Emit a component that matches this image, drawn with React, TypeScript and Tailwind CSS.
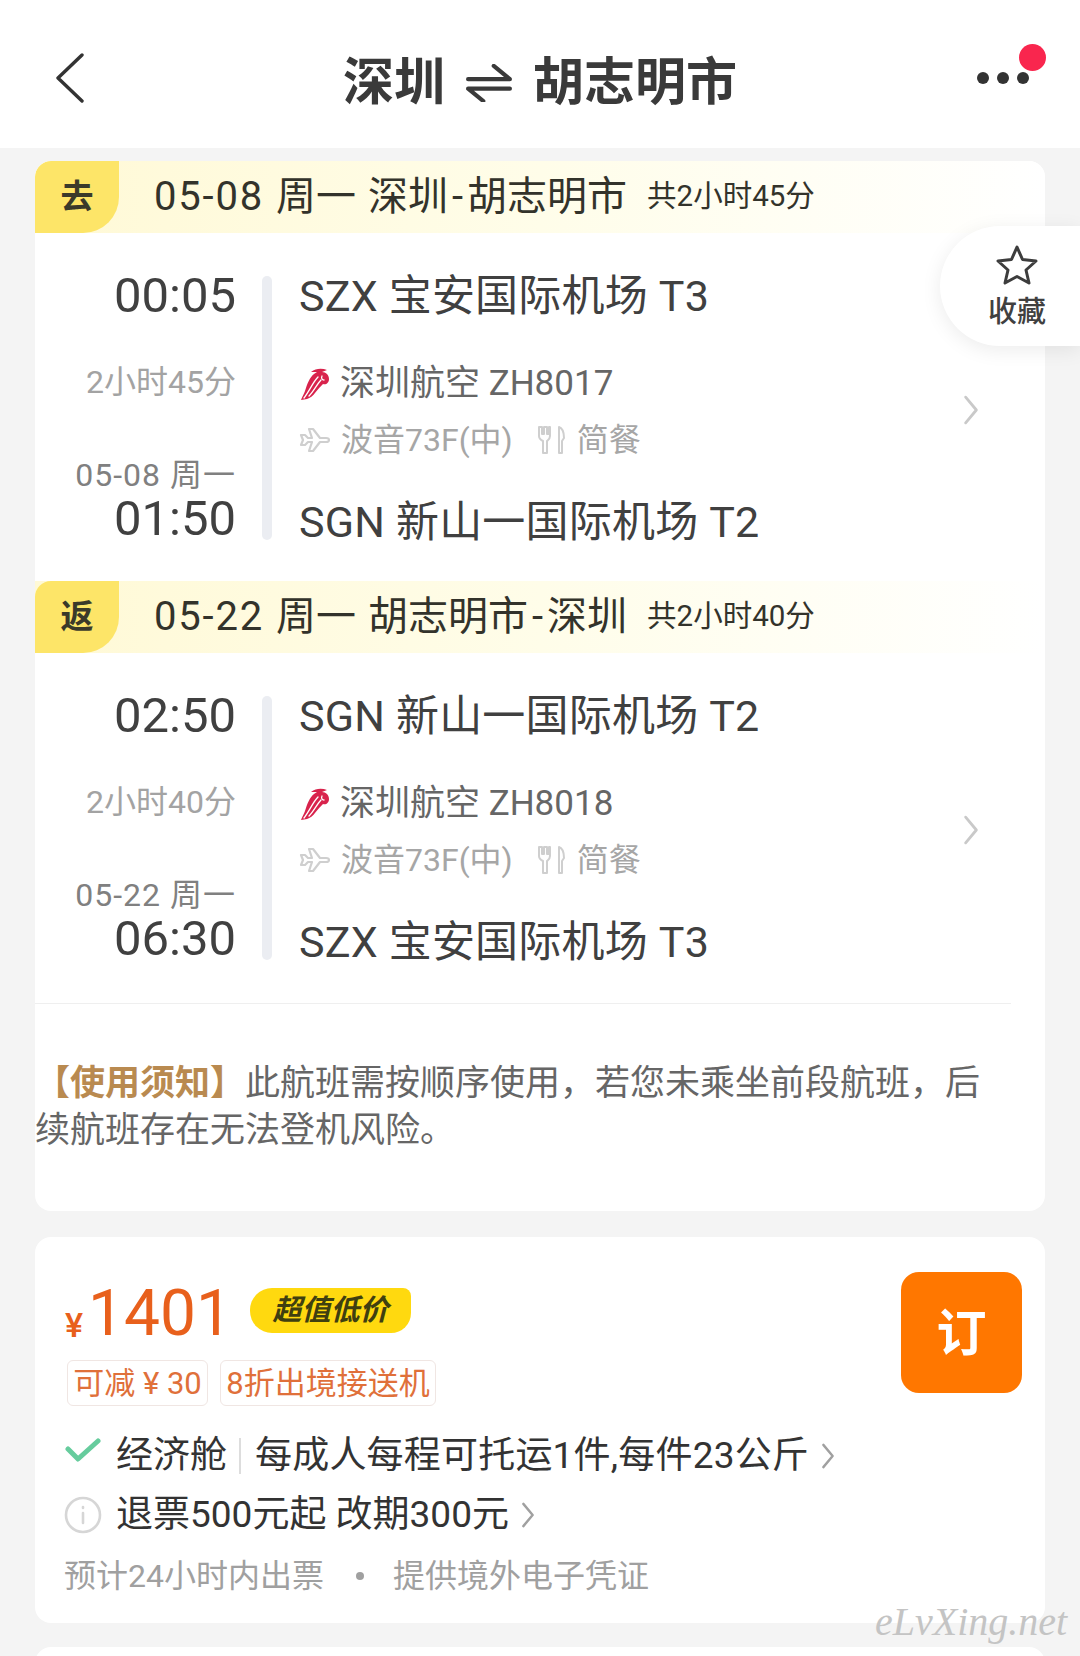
import React from 'react';

const SANS = 'font-["Roboto","Noto_Sans_CJK_SC",sans-serif]';

const ChevronRight = ({ className }: { className: string }) => (
  <svg viewBox="0 0 14 28" fill="none" stroke="currentColor" strokeWidth="2.6" strokeLinecap="round" strokeLinejoin="round" className={className}>
    <path d="M2 2l10 12L2 26" />
  </svg>
);

const AirlineLogo = () => (
  <svg viewBox="0 0 32 34" className="w-[32px] h-[34px] shrink-0">
    <path fill="#d8234c" d="M12 5c5-4 11-4 16-2l-5 2c4 0 7 3 7 7 0 4-3 6-6 5-2 2-5 5-8 9-2 3-5 5-8 6l-6 1c1-3 3-6 4-9 2-7 5-14 9-17l3-2z" />
    <path fill="none" stroke="#ffffff" strokeWidth="1.3" strokeLinecap="round" d="M19 10C14 15 11 23 5 31M22 13C18 17 15 24 10 29" />
    <path fill="none" stroke="#ffffff" strokeWidth="1.3" strokeLinecap="round" d="M23 9c-1 2 0 4 2 4" />
  </svg>
);

const PlaneIcon = () => (
  <svg viewBox="0 0 32 26" className="w-[32px] h-[26px] shrink-0" fill="none" stroke="#cfcfcf" strokeWidth="2.2" strokeLinejoin="round">
    <path d="M2 8l4 0 3 3 4 0-3-9 4 0 7 9 6 0c4 0 4 4 0 4l-6 0-7 9-4 0 3-9-4 0-3 3-4 0 2-5z" />
  </svg>
);

const MealIcon = () => (
  <svg viewBox="0 0 28 30" className="w-[28px] h-[30px] shrink-0" fill="none" stroke="#cfcfcf" strokeWidth="2" strokeLinejoin="round">
    <path d="M2 2h3v7h2V2h3v7h2V2h1v9c0 3-2 4-3 5v12H6V16c-2-1-4-2-4-5z" />
    <path d="M22 2c3 1 5 5 5 11l-2 3v12h-3z" />
  </svg>
);

type SegmentProps = {
  tab: string;
  date: string;
  from: string;
  to: string;
  total: string;
  depTime: string;
  depAirport: string;
  duration: string;
  flight: string;
  arrTime: string;
  arrAirport: string;
};

const Segment = (p: SegmentProps) => (
  <div>
    <div className="flex items-center h-[72px] bg-gradient-to-r from-[#fff9d6] via-[#fffde9] to-white">
      <div className="flex items-center justify-center w-[84px] h-full bg-[#fde568] rounded-tl-[16px] rounded-br-[36px] text-[33px] font-bold text-[#3a3a2a]">
        {p.tab}
      </div>
      <div className="ml-[35px] text-[40px] leading-none text-[#33332b] whitespace-nowrap">
        <span className="tracking-[1.8px]">{p.date}</span>
        <span className="ml-[12px]">周一</span>
        <span className="ml-[12px]">{p.from}</span>
        <span className="mx-[4px]">-</span>
        <span>{p.to}</span>
      </div>
      <div className="ml-[20px] text-[29.5px] leading-none text-[#33332b] whitespace-nowrap">{p.total}</div>
    </div>
    <div className="flex h-[348px] pt-[39px]">
      <div className="w-[201px] shrink-0 text-right whitespace-nowrap">
        <div className="text-[49px] leading-[48px] text-[#404040]">{p.depTime}</div>
        <div className="mt-[42px] text-[32px] leading-[40px] text-[#a3a3a3]">{p.duration}</div>
        <div className="mt-[53px] text-[32px] leading-[40px] tracking-[1px] text-[#808080]">{p.date} 周一</div>
        <div className="text-[49px] leading-[48px] text-[#404040]">{p.arrTime}</div>
      </div>
      <div className="ml-[26px] mt-[4px] w-[10px] h-[264px] rounded-full bg-[#ebedf2]" />
      <div className="ml-[27px] flex-1 relative whitespace-nowrap">
        <div className="text-[43px] leading-[48px] tracking-[0.2px] text-[#404040]">{p.depAirport}</div>
        <div className="mt-[44px] flex items-center h-[40px] text-[35px] text-[#666666]">
          <AirlineLogo />
          <span className="ml-[9px]">{p.flight}</span>
        </div>
        <div className="mt-[16px] flex items-center h-[40px] text-[32px] text-[#a6a6a6]">
          <PlaneIcon />
          <span className="ml-[10px]">波音73F(中)</span>
          <span className="ml-[24px]"><MealIcon /></span>
          <span className="ml-[12px]">简餐</span>
        </div>
        <div className="mt-[38px] text-[43px] leading-[48px] tracking-[0.2px] text-[#404040]">{p.arrAirport}</div>
        <ChevronRight className="absolute left-[663px] top-[123px] w-[18px] h-[30px] text-[#c9c9c9]" />
      </div>
    </div>
  </div>
);

export default function App() {
  return (
    <div className={`relative w-[1080px] h-[1656px] overflow-hidden bg-[#f4f4f4] ${SANS}`}>
      <header className="relative flex items-center justify-center h-[148px] bg-white text-[#333333]">
        <svg viewBox="0 0 30 50" fill="none" stroke="#333" strokeWidth="3.4" strokeLinecap="round" strokeLinejoin="round" className="absolute left-[55px] top-[53px] w-[30px] h-[50px]">
          <path d="M27 2L3 25l24 23" />
        </svg>
        <div className="flex items-center text-[51px] leading-none font-bold mt-[17px] text-[#3a3a3a]">
          <span>深圳</span>
          <svg viewBox="0 0 48 40" fill="none" stroke="#3a3a3a" strokeWidth="4.4" strokeLinecap="round" strokeLinejoin="round" className="mx-[21px] w-[46px] h-[38px]">
            <path d="M2 16h44L29 2" />
            <path d="M46 26H2l16 13" />
          </svg>
          <span>胡志明市</span>
        </div>
        <div className="absolute left-[977px] top-[72px] flex gap-[8px]">
          <span className="w-[12px] h-[12px] rounded-full bg-[#333333]" />
          <span className="w-[12px] h-[12px] rounded-full bg-[#333333]" />
          <span className="w-[12px] h-[12px] rounded-full bg-[#333333]" />
        </div>
        <span className="absolute left-[1019px] top-[44px] w-[27px] h-[27px] rounded-full bg-[#f9264e]" />
      </header>

      <main className="px-[35px] pt-[13px]">
        <section className="h-[1050px] bg-white rounded-[16px] overflow-hidden">
          <Segment
            tab="去"
            date="05-08"
            from="深圳"
            to="胡志明市"
            total="共2小时45分"
            depTime="00:05"
            depAirport="SZX 宝安国际机场 T3"
            duration="2小时45分"
            flight="深圳航空 ZH8017"
            arrTime="01:50"
            arrAirport="SGN 新山一国际机场 T2"
          />
          <Segment
            tab="返"
            date="05-22"
            from="胡志明市"
            to="深圳"
            total="共2小时40分"
            depTime="02:50"
            depAirport="SGN 新山一国际机场 T2"
            duration="2小时40分"
            flight="深圳航空 ZH8018"
            arrTime="06:30"
            arrAirport="SZX 宝安国际机场 T3"
          />
          <div className="w-[976px] mt-[2px] border-t border-[#efefef]" />
          <p className="mt-[56px] w-[976px] text-[35px] leading-[47px] text-[#666666]">
            <span className="font-bold text-[#b98a50]">【使用须知】</span>此航班需按顺序使用，若您未乘坐前段航班，后续航班存在无法登机风险。
          </p>
        </section>

        <section className="relative mt-[26px] h-[386px] bg-white rounded-[16px] px-[30px] pt-[42px]">
          <div className="flex items-start h-[60px]">
            <span className="mt-[30px] text-[34px] leading-[32px] font-medium text-[#e8601c]">¥</span>
            <span className="mt-[5px] ml-[5px] text-[64px] leading-[60px] text-[#e8601c]">1401</span>
            <span className="mt-[9px] ml-[18px] flex items-center justify-center w-[161px] h-[45px] bg-[#ffd90f] rounded-l-[22px] rounded-r-[20px] rounded-tr-[8px] text-[29px] leading-none font-bold italic text-[#3f3f10]">
              超值低价
            </span>
          </div>
          <div className="flex gap-[12px] ml-[2px] mt-[21px]">
            <span className="flex items-center justify-center w-[141px] h-[46px] pt-[2px] rounded-[6px] border border-[#f0e6e3] text-[31px] text-[#e0703a]">可减 ¥ 30</span>
            <span className="flex items-center justify-center w-[216px] h-[46px] pt-[2px] rounded-[6px] border border-[#f0e6e3] text-[31px] text-[#e0703a]">8折出境接送机</span>
          </div>
          <div className="flex items-center h-[44px] mt-[28px] text-[37px] text-[#333333] whitespace-nowrap">
            <svg viewBox="0 0 36 24" fill="none" stroke="#66cc9d" strokeWidth="5" strokeLinecap="round" strokeLinejoin="round" className="w-[36px] h-[24px] -mt-[12px]">
              <path d="M3 11l10 10L33 3" />
            </svg>
            <span className="ml-[15px]">经济舱</span>
            <span className="ml-[12px] w-[2px] h-[36px] bg-[#dddddd]" />
            <span className="ml-[14px] tracking-[0.2px]">每成人每程可托运1件,每件23公斤</span>
            <ChevronRight className="ml-[12px] w-[14px] h-[26px] text-[#a0a0a0]" />
          </div>
          <div className="flex items-center h-[44px] mt-[15px] text-[37px] text-[#333333] whitespace-nowrap">
            <svg viewBox="0 0 38 38" fill="none" stroke="#d6d6d6" strokeWidth="2.6" strokeLinecap="round" className="w-[38px] h-[38px] -ml-[1px]">
              <circle cx="19" cy="19" r="17" />
              <path d="M19 17v10M19 11v1" />
            </svg>
            <span className="ml-[14px]">退票500元起 改期300元</span>
            <ChevronRight className="ml-[12px] w-[14px] h-[26px] text-[#a0a0a0]" />
          </div>
          <div className="flex items-center h-[40px] -ml-[1px] mt-[19px] text-[32px] text-[#a0a0a0] whitespace-nowrap">
            <span>预计24小时内出票</span>
            <span className="ml-[32px] w-[8px] h-[8px] rounded-full bg-[#a0a0a0]" />
            <span className="ml-[29px]">提供境外电子凭证</span>
          </div>
          <button className="absolute left-[866px] top-[35px] w-[121px] h-[121px] pt-[3px] rounded-[18px] bg-[#ff7700] text-white text-[50px] font-bold">
            订
          </button>
        </section>

        <section className="mt-[24px] h-[40px] bg-white rounded-t-[16px]" />
      </main>

      {/* collect tab sits over the card */}
      <div className="absolute left-[940px] top-[226px] flex flex-col items-center w-[140px] h-[120px] pl-[14px] bg-white rounded-l-[60px] shadow-[0_4px_20px_rgba(0,0,0,0.08)]">
        <svg viewBox="0 0 42 40" fill="none" stroke="#3d3d3d" strokeWidth="3" strokeLinejoin="round" className="mt-[19px] w-[42px] h-[40px]">
          <path d="M21 2l5.5 12.5L40 16l-10 9 3 13-12-6.5L9 38l3-13L2 16l13.5-1.5z" />
        </svg>
        <span className="mt-[9px] text-[29px] leading-[36px] font-medium text-[#404040]">收藏</span>
      </div>

      {/* watermark */}
      <div className='absolute left-[875px] top-[1600px] font-["Liberation_Serif",serif] italic text-[40px] leading-[44px] text-[#c4c4c4] whitespace-nowrap'>
        eLvXing.net
      </div>
    </div>
  );
}
